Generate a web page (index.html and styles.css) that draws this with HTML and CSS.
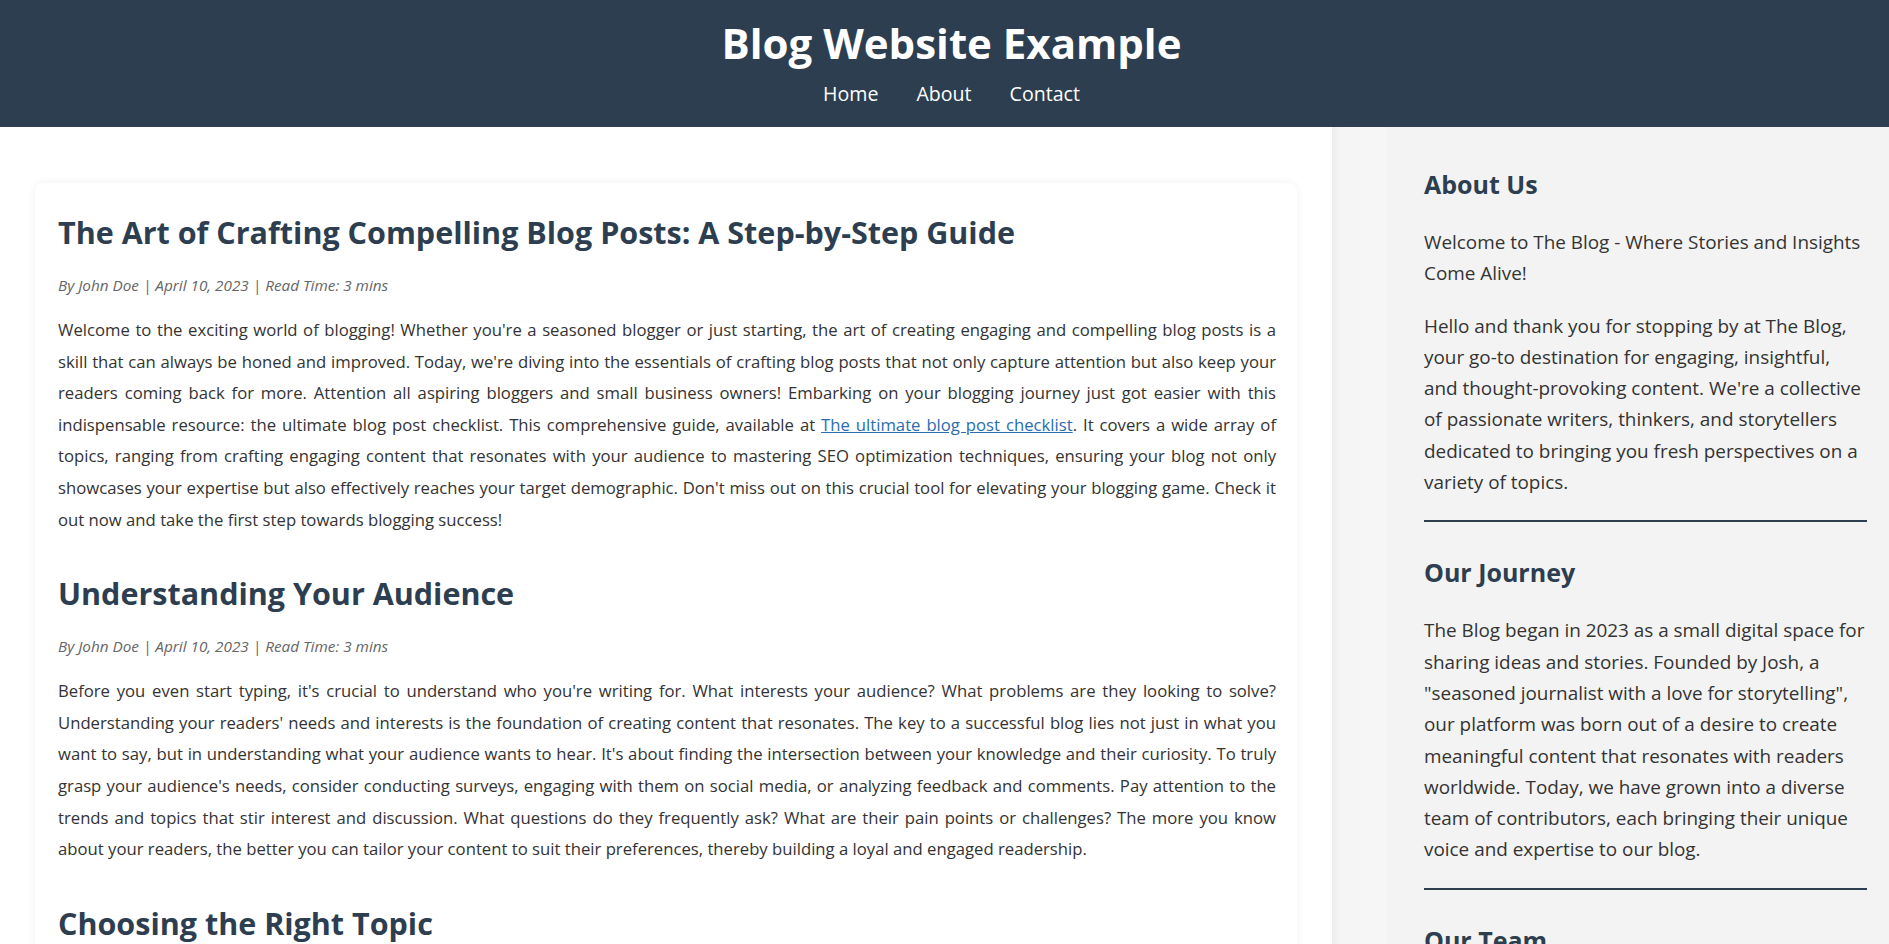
FILE: index.html
```html
<!DOCTYPE html>
<html lang="en">
<head>
<meta charset="utf-8">
<title>Blog Website Example</title>
<link rel="stylesheet" href="styles.css">
</head>
<body>
<header class="site-header">
  <h1 class="site-title">Blog Website Example</h1>
  <nav class="site-nav">
    <a href="#">Home</a>
    <a href="#">About</a>
    <a href="#">Contact</a>
  </nav>
</header>
<div class="layout">
  <main class="content">
    <div class="card">
      <article class="post">
        <h2 class="post-title">The Art of Crafting Compelling Blog Posts: A Step-by-Step Guide</h2>
        <p class="post-meta">By John Doe | April 10, 2023 | Read Time: 3 mins</p>
        <p class="post-body">Welcome to the exciting world of blogging! Whether you're a seasoned blogger or just starting, the art of creating engaging and compelling blog posts is a skill that can always be honed and improved. Today, we're diving into the essentials of crafting blog posts that not only capture attention but also keep your readers coming back for more. Attention all aspiring bloggers and small business owners! Embarking on your blogging journey just got easier with this indispensable resource: the ultimate blog post checklist. This comprehensive guide, available at <a href="#">The ultimate blog post checklist</a>. It covers a wide array of topics, ranging from crafting engaging content that resonates with your audience to mastering SEO optimization techniques, ensuring your blog not only showcases your expertise but also effectively reaches your target demographic. Don't miss out on this crucial tool for elevating your blogging game. Check it out now and take the first step towards blogging success!</p>
      </article>
      <article class="post">
        <h2 class="post-title">Understanding Your Audience</h2>
        <p class="post-meta">By John Doe | April 10, 2023 | Read Time: 3 mins</p>
        <p class="post-body">Before you even start typing, it's crucial to understand who you're writing for. What interests your audience? What problems are they looking to solve? Understanding your readers' needs and interests is the foundation of creating content that resonates. The key to a successful blog lies not just in what you want to say, but in understanding what your audience wants to hear. It's about finding the intersection between your knowledge and their curiosity. To truly grasp your audience's needs, consider conducting surveys, engaging with them on social media, or analyzing feedback and comments. Pay attention to the trends and topics that stir interest and discussion. What questions do they frequently ask? What are their pain points or challenges? The more you know about your readers, the better you can tailor your content to suit their preferences, thereby building a loyal and engaged readership.</p>
      </article>
      <article class="post">
        <h2 class="post-title">Choosing the Right Topic</h2>
        <p class="post-meta">By John Doe | April 10, 2023 | Read Time: 3 mins</p>
        <p class="post-body">Selecting the right topic is half the battle. Look for subjects that align with your expertise and your audience's interests, and that offer room for a fresh angle or a unique perspective.</p>
      </article>
    </div>
  </main>
  <aside class="sidebar">
    <section class="side-section">
      <h3 class="side-title">About Us</h3>
      <p>Welcome to The Blog - Where Stories and Insights Come Alive!</p>
      <p>Hello and thank you for stopping by at The Blog, your go-to destination for engaging, insightful, and thought-provoking content. We're a collective of passionate writers, thinkers, and storytellers dedicated to bringing you fresh perspectives on a variety of topics.</p>
    </section>
    <hr class="side-rule">
    <section class="side-section">
      <h3 class="side-title">Our Journey</h3>
      <p>The Blog began in 2023 as a small digital space for sharing ideas and stories. Founded by Josh, a "seasoned journalist with a love for storytelling", our platform was born out of a desire to create meaningful content that resonates with readers worldwide. Today, we have grown into a diverse team of contributors, each bringing their unique voice and expertise to our blog.</p>
    </section>
    <hr class="side-rule">
    <section class="side-section">
      <h3 class="side-title">Our Team</h3>
      <p>Our team is made up of writers, editors and creators who share a passion for great stories.</p>
    </section>
  </aside>
</div>
</body>
</html>
```
FILE: styles.css
```css
html, body {
  margin: 0;
  padding: 0;
}
body {
  font-family: "Open Sans", "Noto Sans", sans-serif;
  color: #333;
  background: #fff;
}

.site-header {
  background: #2c3e50;
  color: #fff;
  text-align: center;
  padding: 19px 0 21px 14px;
}
.site-title {
  margin: 0 0 15px;
  font-size: 42px;
  line-height: 48px;
  font-weight: 700;
}
.site-nav {
  display: flex;
  justify-content: center;
  gap: 38px;
  font-size: 19.6px;
  line-height: 24px;
}
.site-nav a {
  color: #fff;
  text-decoration: none;
}

.layout {
  display: flex;
  align-items: stretch;
}
.content {
  flex: 1;
  min-width: 0;
  padding: 56px 35px 40px;
}
.card {
  background: #fff;
  border-radius: 8px;
  box-shadow: 0 0 8px rgba(0, 0, 0, 0.06);
  padding: 31px 21px 20px 23px;
}
.post-title {
  margin: 0 0 24px;
  font-size: 30.5px;
  line-height: 36px;
  font-weight: 700;
  color: #2c3e50;
}
.post-meta {
  margin: 0 0 18px;
  font-size: 15.3px;
  line-height: 22px;
  font-style: italic;
  color: #666;
}
.post-body {
  margin: 0 0 40px;
  font-size: 16.7px;
  line-height: 31.6px;
  text-align: justify;
}
.post-body a {
  color: #2a6db0;
}

.sidebar {
  width: 557px;
  flex: none;
  box-sizing: border-box;
  padding: 42px 22px 20px 92px;
  background: linear-gradient(to right, #ebebeb 0px, #f5f5f5 8px, #f6f6f6 54px, #f3f3f3 55px);
}
.side-title {
  margin: 0 0 27px;
  font-size: 25px;
  line-height: 31px;
  font-weight: 700;
  color: #2c3e50;
}
.side-section p {
  margin: 0 0 21px;
  font-size: 18.9px;
  line-height: 31.3px;
}
.side-section p:last-child {
  margin-bottom: 22px;
}
.side-rule {
  border: 0;
  height: 2px;
  background: #2c3e50;
  margin: 0 0 35px;
}
```
